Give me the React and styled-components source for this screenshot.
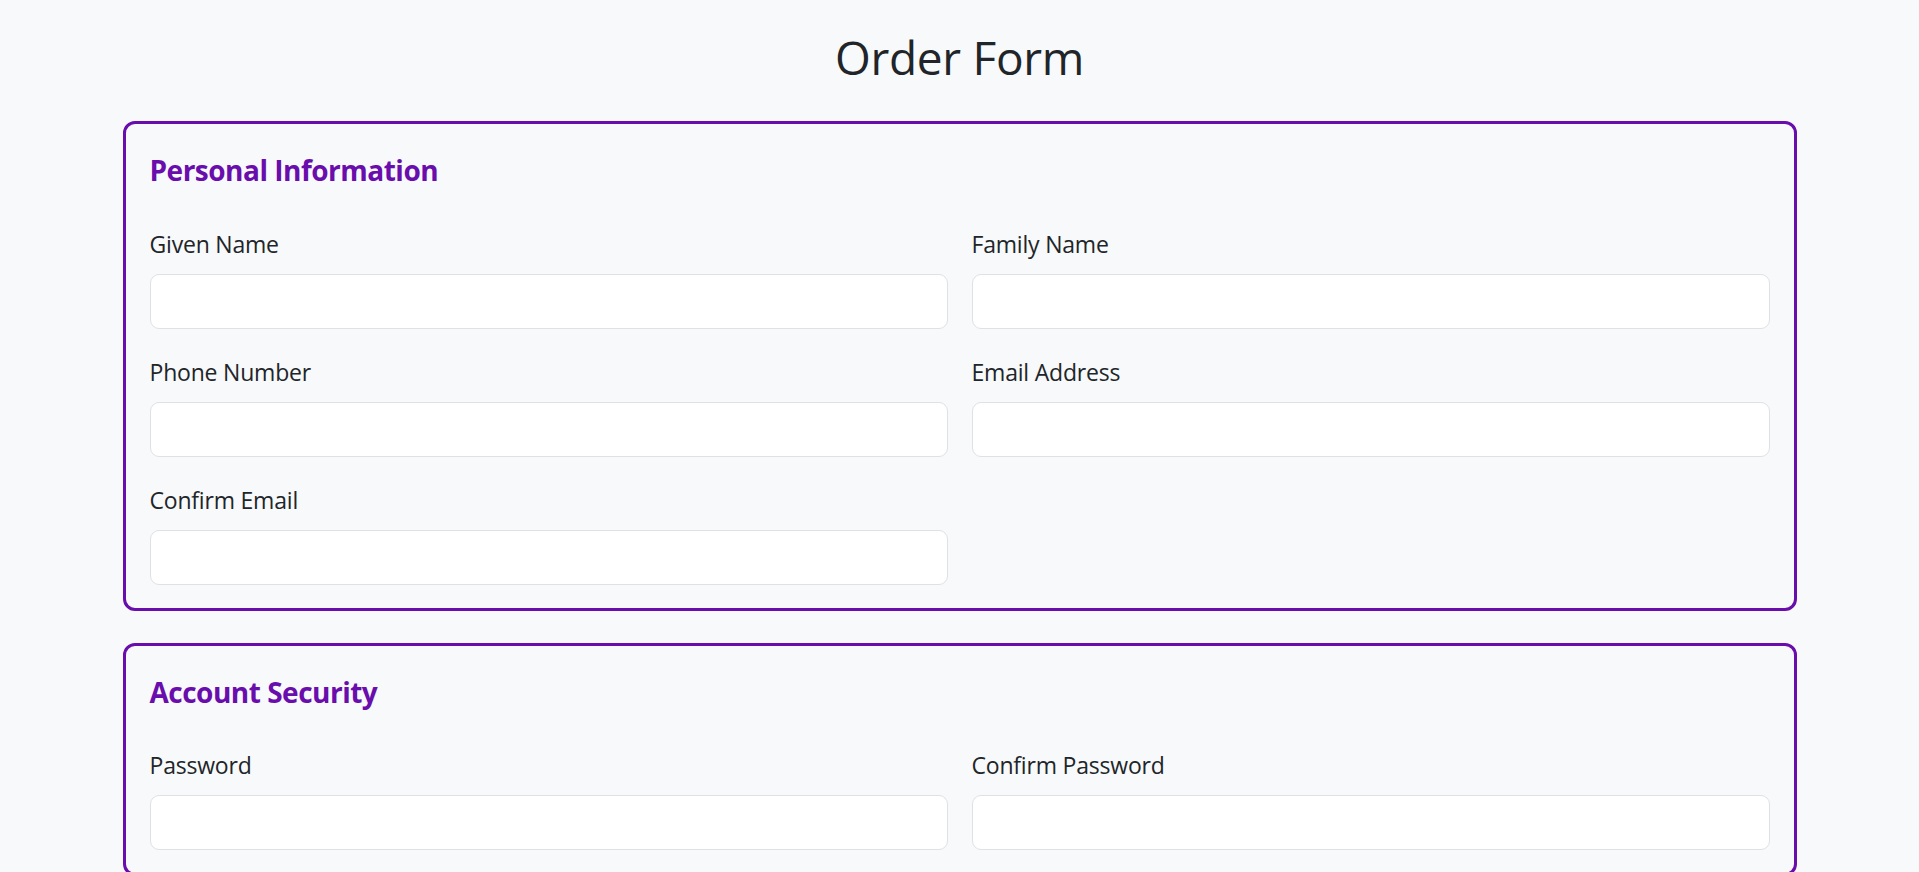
import React from 'react';
import styled, { createGlobalStyle } from 'styled-components';

const GlobalStyle = createGlobalStyle`
	html, body {
		margin: 0;
		padding: 0;
		background-color: #f8f9fa;
	}
	body {
		overflow-x: hidden;
		font-family: 'Open Sans', 'Noto Sans', 'Liberation Sans', sans-serif;
		color: #212529;
	}
	::-webkit-scrollbar {
		width: 7px;
	}
	::-webkit-scrollbar-track {
		background: #f8f9fa;
	}
	::-webkit-scrollbar-thumb {
		background-color: #8a8a8a;
		border: 2px solid transparent;
		border-left-width: 3px;
		border-right-width: 1px;
		background-clip: content-box;
	}
`;

const Page = styled.div`
	width: 100vw;
	min-height: 2518px;
	box-sizing: border-box;
	padding-bottom: 40px;
`;

const Container = styled.div`
	width: 1674px;
	margin: 0 auto;
`;

const Title = styled.h1`
	margin: 30px 0 36px;
	font-size: 46px;
	font-weight: 400;
	letter-spacing: -0.3px;
	line-height: 1.2;
	text-align: center;
	color: #212529;
`;

const Section = styled.section`
	box-sizing: border-box;
	border: 3px solid #6a0dad;
	border-radius: 12px;
	padding: 30px 24px 23px;
	margin-bottom: 32px;
`;

const SectionTitle = styled.h2`
	margin: 0 0 38px;
	font-size: 28px;
	font-weight: 700;
	letter-spacing: -0.5px;
	line-height: 1.2;
	color: #6a0dad;
`;

const FieldGrid = styled.div`
	display: grid;
	grid-template-columns: 1fr 1fr;
	column-gap: 24px;
	row-gap: 25px;
`;

const Field = styled.div`
	display: flex;
	flex-direction: column;
`;

const Label = styled.label`
	font-size: 23px;
	letter-spacing: -0.2px;
	line-height: 36px;
	margin-bottom: 12px;
	color: #212529;
`;

const Input = styled.input`
	box-sizing: border-box;
	height: 55px;
	width: 100%;
	padding: 0 18px;
	font-size: 24px;
	font-family: inherit;
	background: #fff;
	border: 1px solid #dee2e6;
	border-radius: 9px;
	outline: none;
`;

const sections = [
	{
		title: 'Personal Information',
		fields: [
			{ id: 'given', label: 'Given Name', type: 'text' },
			{ id: 'family', label: 'Family Name', type: 'text' },
			{ id: 'phone', label: 'Phone Number', type: 'tel' },
			{ id: 'email', label: 'Email Address', type: 'email' },
			{ id: 'confirmEmail', label: 'Confirm Email', type: 'email' },
		],
	},
	{
		title: 'Account Security',
		fields: [
			{ id: 'password', label: 'Password', type: 'password' },
			{ id: 'confirmPassword', label: 'Confirm Password', type: 'password' },
		],
	},
];

const App = () => {
	return (
		<Page>
			<GlobalStyle />
			<Container>
				<Title>Order Form</Title>
				{sections.map((section) => (
					<Section key={section.title}>
						<SectionTitle>{section.title}</SectionTitle>
						<FieldGrid>
							{section.fields.map((f) => (
								<Field key={f.id}>
									<Label htmlFor={f.id}>{f.label}</Label>
									<Input id={f.id} type={f.type} />
								</Field>
							))}
						</FieldGrid>
					</Section>
				))}
			</Container>
		</Page>
	);
};

export default App;
